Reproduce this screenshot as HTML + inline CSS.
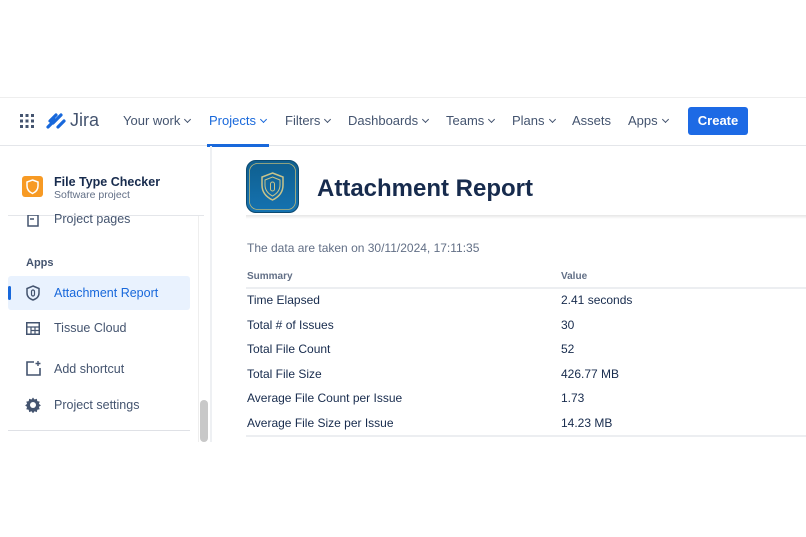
<!DOCTYPE html><html><head><meta charset="utf-8"><style>
*{margin:0;padding:0;box-sizing:border-box}
body{width:806px;height:537px;background:#fff;font-family:"Liberation Sans",sans-serif;position:relative;overflow:hidden;color:#172b4d}
.a{position:absolute;white-space:nowrap}
.nav{font-size:13px;color:#44546f}
.chev{display:inline-block;width:5px;height:5px;border-right:1.5px solid currentColor;border-bottom:1.5px solid currentColor;transform:rotate(45deg);margin-left:5px;position:relative;top:-3px}
.side{font-size:12.5px;color:#44546f}
.tr{font-size:12px;color:#172b4d}
</style></head><body>
<div class="a" style="left:0;top:97px;width:806px;height:1px;background:#eee"></div>
<div class="a" style="left:0;top:145px;width:806px;height:1px;background:#e4e6ea"></div>
<!-- grid icon -->
<svg class="a" style="left:20px;top:114px" width="14" height="14"><g fill="#44546f"><rect x="0" y="0" width="3" height="3"/><rect x="5.5" y="0" width="3" height="3"/><rect x="11" y="0" width="3" height="3"/><rect x="0" y="5.5" width="3" height="3"/><rect x="5.5" y="5.5" width="3" height="3"/><rect x="11" y="5.5" width="3" height="3"/><rect x="0" y="11" width="3" height="3"/><rect x="5.5" y="11" width="3" height="3"/><rect x="11" y="11" width="3" height="3"/></g></svg>
<svg class="a" style="left:46px;top:113px" width="20" height="16"><path d="M2 14 L9 7 M7 10 L15 2 M12 14 L18 8 M4 8 L10 2" stroke="#1868db" stroke-width="3.2" stroke-linecap="round"/></svg>
<div class="a" style="left:70px;top:110px;font-size:18px;color:#44546f">Jira</div>
<div class="a nav" style="left:123px;top:113px">Your work<span class="chev"></span></div>
<div class="a nav" style="left:209px;top:113px;color:#1868db">Projects<span class="chev"></span></div>
<div class="a" style="left:207px;top:144px;width:62px;height:3px;background:#1868db"></div>
<div class="a nav" style="left:285px;top:113px">Filters<span class="chev"></span></div>
<div class="a nav" style="left:348px;top:113px">Dashboards<span class="chev"></span></div>
<div class="a nav" style="left:446px;top:113px">Teams<span class="chev"></span></div>
<div class="a nav" style="left:512px;top:113px">Plans<span class="chev"></span></div>
<div class="a nav" style="left:572px;top:113px">Assets</div>
<div class="a nav" style="left:628px;top:113px">Apps<span class="chev"></span></div>
<div class="a" style="left:688px;top:107px;width:60px;height:28px;background:#1d6ae5;border-radius:3px;color:#fff;font-size:13px;font-weight:bold;text-align:center;line-height:28px">Create</div>
<!-- sidebar -->
<div class="a" style="left:210px;top:146px;width:2px;height:296px;background:#eef0f3"></div>
<div class="a" style="left:198px;top:215px;width:1px;height:227px;background:#eee"></div>
<div class="a" style="left:200px;top:400px;width:8px;height:42px;background:#c8c8c8;border-radius:4px"></div>
<svg class="a" style="left:22px;top:176px" width="21" height="21"><rect width="21" height="21" rx="3" fill="#f79a24"/><path d="M10.5 4 L16 6 V10 Q16 15 10.5 17.5 Q5 15 5 10 V6Z" fill="none" stroke="#fff" stroke-width="1.5"/></svg>
<div class="a" style="left:54px;top:175px;font-size:12.5px;font-weight:bold;color:#172b4d">File Type Checker</div>
<div class="a" style="left:54px;top:189px;font-size:10.5px;color:#626f86">Software project</div>
<div class="a" style="left:8px;top:215px;width:196px;height:1px;background:#e4e6ea"></div>
<svg class="a" style="left:27px;top:215px" width="12" height="12"><rect x="1" y="0" width="10" height="11" fill="none" stroke="#44546f" stroke-width="1.5"/><line x1="3" y1="4" x2="7" y2="4" stroke="#44546f" stroke-width="1.5"/></svg>
<div class="a side" style="left:54px;top:212px">Project pages</div>
<div class="a" style="left:26px;top:257px;font-size:11px;font-weight:bold;color:#44546f">Apps</div>
<div class="a" style="left:8px;top:276px;width:182px;height:34px;background:#e9f2fe;border-radius:3px"></div>
<div class="a" style="left:8px;top:286px;width:3px;height:14px;background:#1868db;border-radius:2px"></div>
<svg class="a" style="left:26px;top:285px" width="14" height="16"><path d="M7 1 L13 3.5 V8 Q13 13 7 15 Q1 13 1 8 V3.5Z" fill="none" stroke="#44546f" stroke-width="1.5"/><rect x="5.5" y="5" width="3" height="6" rx="1.5" fill="none" stroke="#44546f" stroke-width="1.2"/></svg>
<div class="a side" style="left:54px;top:286px;color:#1868db">Attachment Report</div>
<svg class="a" style="left:26px;top:322px" width="14" height="13"><rect x="0.75" y="0.75" width="12.5" height="11.5" fill="none" stroke="#44546f" stroke-width="1.5"/><path d="M1 5H13M5 5V12M9 5V12M5 8.5H13" stroke="#44546f" stroke-width="1.2"/></svg>
<div class="a side" style="left:54px;top:321px">Tissue Cloud</div>
<svg class="a" style="left:25px;top:360px" width="17" height="17"><path d="M9 2H2V15H15V8" fill="none" stroke="#44546f" stroke-width="1.6"/><path d="M13 1V6M10.5 3.5H15.5" stroke="#44546f" stroke-width="1.4"/></svg>
<div class="a side" style="left:54px;top:362px">Add shortcut</div>
<svg class="a" style="left:25px;top:397px" width="16" height="16" viewBox="0 0 16 16"><path d="M8 0.5l1.5 2 2.3-.8.5 2.4 2.4.5-.8 2.3 2 1.5-2 1.5.8 2.3-2.4.5-.5 2.4-2.3-.8-1.5 2-1.5-2-2.3.8-.5-2.4-2.4-.5.8-2.3-2-1.5 2-1.5-.8-2.3 2.4-.5.5-2.4 2.3.8z" fill="#44546f"/><circle cx="8" cy="8" r="3" fill="#fff"/></svg>
<div class="a side" style="left:54px;top:398px">Project settings</div>
<div class="a" style="left:8px;top:430px;width:182px;height:1px;background:#dfe1e6"></div>
<!-- content -->
<div class="a" style="left:246px;top:160px;width:53px;height:53px;border-radius:10px;background:linear-gradient(#0f5f8f,#1572b0);border:1.5px solid #0c4a70"></div>
<svg class="a" style="left:246px;top:160px" width="53" height="53"><rect x="3.5" y="3.5" width="46" height="46" rx="8" fill="none" stroke="#b9b77a" stroke-width="0.8"/><path d="M26.5 13 L37 17 V25 Q37 35 26.5 40 Q16 35 16 25 V17Z" fill="none" stroke="#c9c48a" stroke-width="1.5"/><path d="M26.5 17 L34 20 V25 Q34 32 26.5 36 Q19 32 19 25 V20Z" fill="none" stroke="#c9c48a" stroke-width="1"/><rect x="24.5" y="22" width="4" height="9" rx="2" fill="none" stroke="#c9c48a" stroke-width="1"/></svg>
<div class="a" style="left:246px;top:215px;width:560px;height:4px;background:linear-gradient(#e6e6e6,#fff)"></div>
<div class="a" style="left:317px;top:175px;font-size:24px;font-weight:bold;color:#172b4d">Attachment Report</div>
<div class="a" style="left:247px;top:241px;font-size:12px;color:#626f86">The data are taken on 30/11/2024, 17:11:35</div>
<div class="a" style="left:247px;top:271px;font-size:10px;font-weight:bold;color:#626f86">Summary</div>
<div class="a" style="left:561px;top:271px;font-size:10px;font-weight:bold;color:#626f86">Value</div>
<div class="a" style="left:246px;top:287px;width:560px;height:2px;background:#eceef1"></div>
<div class="a tr" style="left:247px;top:293px">Time Elapsed</div><div class="a tr" style="left:561px;top:293px">2.41 seconds</div>
<div class="a tr" style="left:247px;top:318px">Total # of Issues</div><div class="a tr" style="left:561px;top:318px">30</div>
<div class="a tr" style="left:247px;top:342px">Total File Count</div><div class="a tr" style="left:561px;top:342px">52</div>
<div class="a tr" style="left:247px;top:367px">Total File Size</div><div class="a tr" style="left:561px;top:367px">426.77 MB</div>
<div class="a tr" style="left:247px;top:391px">Average File Count per Issue</div><div class="a tr" style="left:561px;top:391px">1.73</div>
<div class="a tr" style="left:247px;top:416px">Average File Size per Issue</div><div class="a tr" style="left:561px;top:416px">14.23 MB</div>
<div class="a" style="left:246px;top:435px;width:560px;height:2px;background:#eceef1"></div>
</body></html>
